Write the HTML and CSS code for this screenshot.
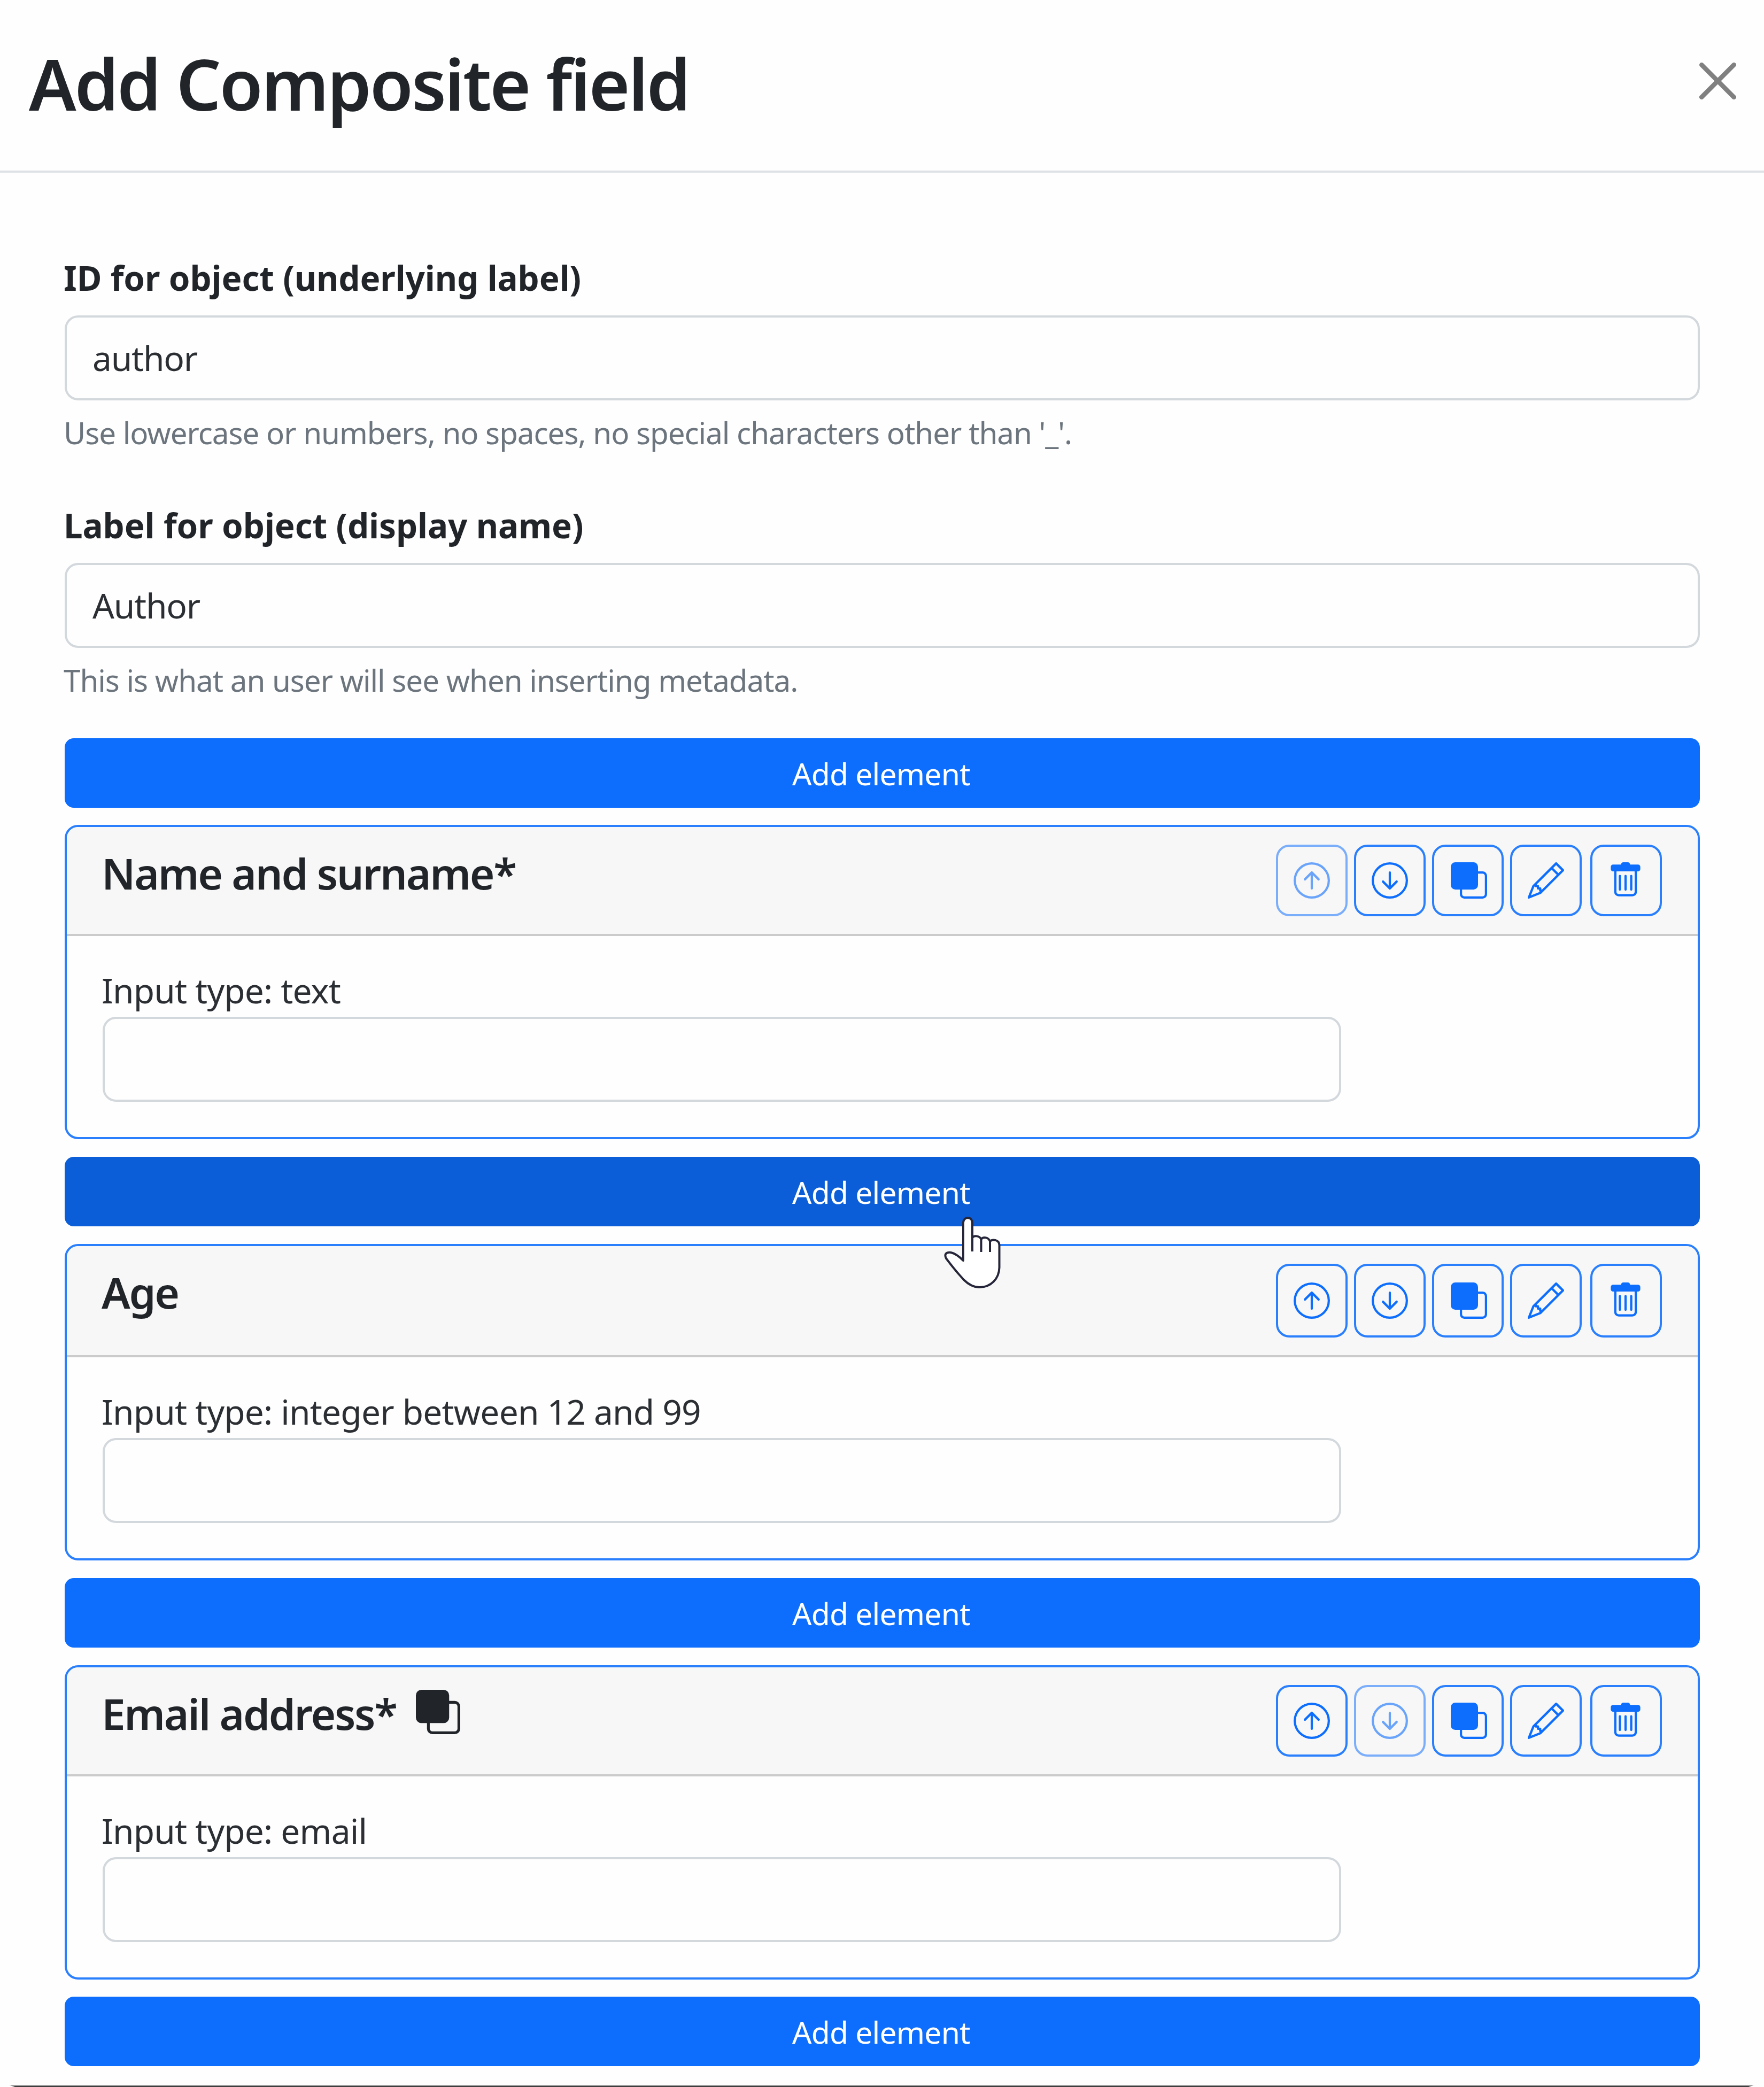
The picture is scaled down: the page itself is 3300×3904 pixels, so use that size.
FILE: index.html
```html
<!DOCTYPE html>
<html lang="en">
<head>
<meta charset="utf-8">
<title>Add Composite field</title>
<link rel="stylesheet" href="styles.css">
</head>
<body>
<svg class="sprite" aria-hidden="true">
  <symbol id="up" viewBox="0 0 16 16"><path fill-rule="evenodd" d="M1 8a7 7 0 1 0 14 0A7 7 0 0 0 1 8zm15 0A8 8 0 1 1 0 8a8 8 0 0 1 16 0zm-7.5 3.5a.5.5 0 0 1-1 0V5.707L5.354 7.854a.5.5 0 1 1-.708-.708l3-3a.5.5 0 0 1 .708 0l3 3a.5.5 0 0 1-.708.708L8.5 5.707V11.5z"/></symbol>
  <symbol id="down" viewBox="0 0 16 16"><path fill-rule="evenodd" d="M1 8a7 7 0 1 0 14 0A7 7 0 0 0 1 8zm15 0A8 8 0 1 1 0 8a8 8 0 0 1 16 0zM8.5 4.5a.5.5 0 0 0-1 0v5.793L5.354 8.146a.5.5 0 1 0-.708.708l3 3a.5.5 0 0 0 .708 0l3-3a.5.5 0 0 0-.708-.708L8.500 10.293V4.500z"/></symbol>
  <symbol id="copy" viewBox="0 0 16 16"><path d="M0 2a2 2 0 0 1 2-2h8a2 2 0 0 1 2 2v2h2a2 2 0 0 1 2 2v8a2 2 0 0 1-2 2H6a2 2 0 0 1-2-2v-2H2a2 2 0 0 1-2-2V2zm5 10v2a1 1 0 0 0 1 1h8a1 1 0 0 0 1-1V6a1 1 0 0 0-1-1h-2v5a2 2 0 0 1-2 2H5z"/></symbol>
  <symbol id="pencil" viewBox="0 0 16 16"><path d="M12.146.146a.5.5 0 0 1 .708 0l3 3a.5.5 0 0 1 0 .708l-10 10a.5.5 0 0 1-.168.11l-5 2a.5.5 0 0 1-.65-.65l2-5a.5.5 0 0 1 .11-.168l10-10zM11.207 2.500 13.500 4.793 14.793 3.500 12.500 1.207 11.207 2.500zm1.586 3L10.500 3.207 4 9.707V10h.5a.5.5 0 0 1 .5.5v.5h.5a.5.5 0 0 1 .5.5v.5h.293l6.500-6.500zm-9.761 5.175-.106.106-1.528 3.821 3.821-1.528.106-.106A.5.5 0 0 1 5 12.500V12h-.5a.5.5 0 0 1-.5-.5V11h-.5a.5.5 0 0 1-.468-.325z"/></symbol>
  <symbol id="trash" viewBox="0 0 16 16"><path d="M5.500 5.500A.5.5 0 0 1 6 6v6a.5.5 0 0 1-1 0V6a.5.5 0 0 1 .5-.5zm2.500 0a.5.5 0 0 1 .5.5v6a.5.5 0 0 1-1 0V6a.5.5 0 0 1 .5-.5zm3 .5a.5.5 0 0 0-1 0v6a.5.5 0 0 0 1 0V6z"/><path fill-rule="evenodd" d="M14.500 3a1 1 0 0 1-1 1H13v9a2 2 0 0 1-2 2H5a2 2 0 0 1-2-2V4h-.5a1 1 0 0 1-1-1V2a1 1 0 0 1 1-1H6a1 1 0 0 1 1-1h2a1 1 0 0 1 1 1h3.500a1 1 0 0 1 1 1v1zM4.118 4 4 4.059V13a1 1 0 0 0 1 1h6a1 1 0 0 0 1-1V4.059L11.882 4H4.118z"/></symbol>
  <symbol id="close" viewBox="0 0 16 16"><path d="M.293.293a1 1 0 0 1 1.414 0L8 6.586 14.293.293a1 1 0 1 1 1.414 1.414L9.414 8l6.293 6.293a1 1 0 0 1-1.414 1.414L8 9.414l-6.293 6.293a1 1 0 0 1-1.414-1.414L6.586 8 .293 1.707a1 1 0 0 1 0-1.414z"/></symbol>
</svg>
<main class="modal">
  <header class="modal-header">
    <h1 class="modal-title">Add Composite field</h1>
    <button class="close" aria-label="Close"><svg><use href="#close"/></svg></button>
  </header>
  <div class="modal-body">
    <div class="field">
      <label class="label" for="fid">ID for object (underlying label)</label>
      <input class="control" id="fid" value="author">
      <div class="hint">Use lowercase or numbers, no spaces, no special characters other than '_'.</div>
    </div>
    <div class="field">
      <label class="label" for="flabel">Label for object (display name)</label>
      <input class="control" id="flabel" value="Author">
      <div class="hint">This is what an user will see when inserting metadata.</div>
    </div>
    <div class="elements">
      <button class="add">Add element</button>
      <section class="card">
        <div class="card-header">
          <h2 class="card-title">Name and surname*</h2>
          <div class="tools">
            <button class="tool" disabled><svg><use href="#up"/></svg></button>
            <button class="tool"><svg><use href="#down"/></svg></button>
            <button class="tool"><svg><use href="#copy"/></svg></button>
            <button class="tool"><svg><use href="#pencil"/></svg></button>
            <button class="tool tool-last"><svg><use href="#trash"/></svg></button>
          </div>
        </div>
        <div class="card-body">
          <div class="type">Input type: text</div>
          <input class="control preview">
        </div>
      </section>
      <button class="add add-hover">Add element</button>
      <section class="card card-tall">
        <div class="card-header">
          <h2 class="card-title">Age</h2>
          <div class="tools">
            <button class="tool"><svg><use href="#up"/></svg></button>
            <button class="tool"><svg><use href="#down"/></svg></button>
            <button class="tool"><svg><use href="#copy"/></svg></button>
            <button class="tool"><svg><use href="#pencil"/></svg></button>
            <button class="tool tool-last"><svg><use href="#trash"/></svg></button>
          </div>
        </div>
        <div class="card-body">
          <div class="type">Input type: integer between 12 and 99</div>
          <input class="control preview">
        </div>
      </section>
      <button class="add">Add element</button>
      <section class="card">
        <div class="card-header">
          <h2 class="card-title">Email address*<svg class="repeat"><use href="#copy"/></svg></h2>
          <div class="tools">
            <button class="tool"><svg><use href="#up"/></svg></button>
            <button class="tool" disabled><svg><use href="#down"/></svg></button>
            <button class="tool"><svg><use href="#copy"/></svg></button>
            <button class="tool"><svg><use href="#pencil"/></svg></button>
            <button class="tool tool-last"><svg><use href="#trash"/></svg></button>
          </div>
        </div>
        <div class="card-body">
          <div class="type">Input type: email</div>
          <input class="control preview">
        </div>
      </section>
      <button class="add">Add element</button>
    </div>
  </div>
  <div class="modal-edge"></div>
  <svg class="cursor" viewBox="0 0 120 145"><path d="M42 88V17a8.500 9 0 0 1 17 0V45C62 41 72 41 75.500 48C79 43 89 44 92 52C96 48 109 48 109.500 59V101C109 122 94 138 72 138C60 138 51 132 43 124C31 111 19 96 10 84C6 76 10 72 19 73C28 75 35 81 42 88Z"/><path class="folds" d="M59 44V71M75.500 47V72M92 51V72"/></svg>
</main>
</body>
</html>
```
FILE: styles.css
```css
* { box-sizing: border-box; }

body {
  margin: 0;
  background: #fefefe;
  color: #212529;
  font-family: "Noto Sans", "Open Sans", sans-serif;
}

button, input { font-family: inherit; margin: 0; }

.sprite { display: none; }

.modal {
  position: relative;
  display: flex;
  flex-direction: column;
  width: 3300px;
  height: 3904px;
  overflow: hidden;
}

.modal-header {
  display: flex;
  justify-content: space-between;
  align-items: flex-start;
  height: 323px;
  padding: 56px 52px 0 54px;
  border-bottom: 4px solid #dee2e6;
}

.modal-title {
  margin: 0;
  font-size: 132px;
  font-weight: 600;
  line-height: 200px;
  letter-spacing: -3.2px;
}

.close {
  display: flex;
  margin-top: 61px;
  padding: 0;
  border: 0;
  background: none;
}

.close svg { width: 69px; height: 69px; fill: #808080; }

.modal-body {
  display: flex;
  flex-direction: column;
  padding: 147px 120px 0 121px;
}

.field {
  display: flex;
  flex-direction: column;
  margin-bottom: 78px;
}

.field + .field { margin-bottom: 63.6px; }

.label {
  margin: 0 0 20px -2px;
  font-size: 63.7px;
  font-weight: 700;
  line-height: 100px;
  letter-spacing: -.1px;
}

.control {
  width: 100%;
  height: 159px;
  padding: 0 48px;
  border: 4px solid #d3d8dd;
  border-radius: 25px;
  background: #fefefe;
  color: #2b2f33;
  font-size: 64px;
  letter-spacing: -1.2px;
}

.hint {
  margin: 17px 0 1px -2px;
  color: #6c757d;
  font-size: 56.5px;
  line-height: 88px;
  letter-spacing: -1.03px;
}

.field + .field .hint { margin-bottom: 0; }

.elements {
  display: flex;
  flex-direction: column;
  gap: 32.8px;
}

.add {
  height: 130px;
  padding: 2px 4px 0 0;
  border: 0;
  border-radius: 17px;
  background: #0d6efd;
  color: #fff;
  font-size: 57px;
  letter-spacing: -.8px;
}

.add-hover { background: #0b5ed7; }

.card {
  border: 4px solid #2a7ffd;
  border-radius: 25px;
  overflow: hidden;
}

.card-header {
  display: flex;
  justify-content: space-between;
  align-items: flex-start;
  padding: 33px 67px 33px 65px;
  border-bottom: 4px solid #cbcbcb;
  background: #f7f7f7;
}

.card-title {
  display: flex;
  margin: 0;
  font-size: 80px;
  font-weight: 600;
  line-height: 106px;
  letter-spacing: -2.3px;
}

.repeat {
  width: 83px;
  height: 83px;
  margin: 9px 0 0 36px;
  fill: #212529;
}

.tools { display: flex; gap: 12px; }

.tool {
  display: flex;
  justify-content: center;
  align-items: center;
  width: 134px;
  height: 134px;
  padding: 0;
  border: 4px solid #2a7ffd;
  border-radius: 25px;
  background: none;
}

.tool:disabled { opacity: .6; }

.tool svg { width: 68px; height: 68px; fill: #0d6efd; }

.tool:nth-child(3) svg { margin-left: 3px; }

.tool-last { margin-left: 4px; }

.tool-last svg { margin-right: 2px; }

.card-tall .tool { height: 138px; }

.card-body { padding: 51px 67px 66px; }

.type {
  margin: 1px 0 -1px -2px;
  color: #2b2f33;
  font-size: 64px;
  line-height: 100px;
  letter-spacing: -.8px;
}

.preview { display: block; width: 2317px; }

/* Rounded lower edge of the dialog against the page behind it */
.modal-edge {
  height: 4px;
  margin: auto 17px 0 16px;
  background: linear-gradient(#dcdcdc 25%, #868686 25% 50%, #4a4a4a 50% 75%, #383334 75%);
  clip-path: polygon(0 0, 100% 0, calc(100% - 12px) 100%, 12px 100%);
}

.cursor {
  position: absolute;
  left: 1760px;
  top: 2270px;
  width: 120px;
  height: 145px;
  fill: #fff;
  stroke: #26263a;
  stroke-width: 4;
  stroke-linejoin: round;
}

.folds { fill: none; }
```
